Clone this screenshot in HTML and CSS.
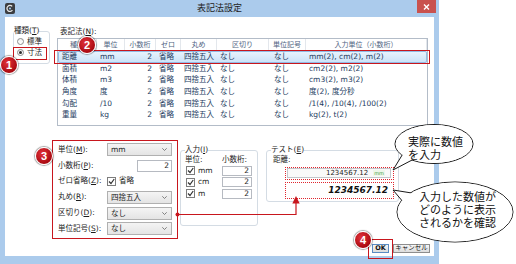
FILE: index.html
```html
<!DOCTYPE html>
<html lang="ja">
<head>
    <meta charset="UTF-8">
    <meta name="viewport" content="width=device-width, initial-scale=1.0">
    <title>表記法設定</title>
    <link rel="stylesheet" href="styles.css">
</head>
<body>
<div class="window">
    <!-- Title bar -->
    <div class="titlebar">
        <span class="app-icon">
            <svg width="10" height="11" viewBox="0 0 10 11">
                <rect x="0" y="0" width="10" height="11" rx="2" fill="#3b3d40"/>
                <path d="M7.2 3.4 A3 3 0 1 0 7.4 7.2" fill="none" stroke="#e8e8e8" stroke-width="1.3"/>
                <circle cx="5" cy="5.5" r="1.1" fill="#9fc3e6"/>
            </svg>
        </span>
        <span class="title">表記法設定</span>
        <span class="close-btn">
            <svg width="7" height="6" viewBox="0 0 7 6">
                <path d="M1 0.5 L6 5.5 M6 0.5 L1 5.5" stroke="#fff" stroke-width="1.4"/>
            </svg>
        </span>
    </div>

    <div class="client">
        <div class="top">
            <fieldset class="group kind">
                <legend>種類(<u>T</u>)</legend>
                <div class="radio-row"><span class="radio"></span>標準</div>
                <div class="radio-row"><span class="radio checked"></span>寸法</div>
            </fieldset>

            <div class="list-section">
                <div class="list-label">表記法(<u>N</u>):</div>
                <div class="list">
                    <div class="list-row list-head">
                        <span>種類</span><span>単位</span><span>小数桁</span><span>ゼロ</span><span>丸め</span><span>区切り</span><span>単位記号</span><span>入力単位（小数桁）</span>
                    </div>
                    <div class="list-row selected">
                        <span>距離</span><span>mm</span><span class="num">2</span><span>省略</span><span>四捨五入</span><span>なし</span><span>なし</span><span>mm(2), cm(2), m(2)</span>
                    </div>
                    <div class="list-row">
                        <span>面積</span><span>m2</span><span class="num">2</span><span>省略</span><span>四捨五入</span><span>なし</span><span>なし</span><span>cm2(2), m2(2)</span>
                    </div>
                    <div class="list-row">
                        <span>体積</span><span>m3</span><span class="num">2</span><span>省略</span><span>四捨五入</span><span>なし</span><span>なし</span><span>cm3(2), m3(2)</span>
                    </div>
                    <div class="list-row">
                        <span>角度</span><span>度</span><span class="num">2</span><span>省略</span><span>四捨五入</span><span>なし</span><span>なし</span><span>度(2), 度分秒</span>
                    </div>
                    <div class="list-row">
                        <span>勾配</span><span>/10</span><span class="num">2</span><span>省略</span><span>四捨五入</span><span>なし</span><span>なし</span><span>/1(4), /10(4), /100(2)</span>
                    </div>
                    <div class="list-row">
                        <span>重量</span><span>kg</span><span class="num">2</span><span>省略</span><span>四捨五入</span><span>なし</span><span>なし</span><span>kg(2), t(2)</span>
                    </div>
                </div>
            </div>
        </div>

        <div class="bottom">
            <!-- Format settings (marked 3) -->
            <div class="format-panel">
                <div class="form-row">
                    <span>単位(<u>M</u>):</span>
                    <span class="combo">mm<svg class="arrow" width="5" height="3" viewBox="0 0 5 3"><path d="M0.3 0.3 L2.5 2.5 L4.7 0.3" fill="none" stroke="#666" stroke-width="0.8"/></svg></span>
                </div>
                <div class="form-row">
                    <span>小数桁(<u>P</u>):</span>
                    <span class="num-box wide">2</span>
                </div>
                <div class="form-row">
                    <span>ゼロ省略(<u>Z</u>):</span>
                    <span class="check-label"><span class="checkbox"><svg width="7" height="7" viewBox="0 0 7 7"><path d="M1 3.5 L3 5.5 L6.2 1" fill="none" stroke="#333" stroke-width="1.2"/></svg></span>省略</span>
                </div>
                <div class="form-row">
                    <span>丸め(<u>R</u>):</span>
                    <span class="combo">四捨五入<svg class="arrow" width="5" height="3" viewBox="0 0 5 3"><path d="M0.3 0.3 L2.5 2.5 L4.7 0.3" fill="none" stroke="#666" stroke-width="0.8"/></svg></span>
                </div>
                <div class="form-row">
                    <span>区切り(<u>D</u>):</span>
                    <span class="combo">なし<svg class="arrow" width="5" height="3" viewBox="0 0 5 3"><path d="M0.3 0.3 L2.5 2.5 L4.7 0.3" fill="none" stroke="#666" stroke-width="0.8"/></svg></span>
                </div>
                <div class="form-row">
                    <span>単位記号(<u>S</u>):</span>
                    <span class="combo">なし<svg class="arrow" width="5" height="3" viewBox="0 0 5 3"><path d="M0.3 0.3 L2.5 2.5 L4.7 0.3" fill="none" stroke="#666" stroke-width="0.8"/></svg></span>
                </div>
            </div>

            <!-- Input units -->
            <fieldset class="group input-group">
                <legend>入力(<u>I</u>)</legend>
                <div class="input-grid">
                    <span>単位:</span><span>小数桁:</span>
                    <span class="check-label"><span class="checkbox"><svg width="7" height="7" viewBox="0 0 7 7"><path d="M1 3.5 L3 5.5 L6.2 1" fill="none" stroke="#333" stroke-width="1.2"/></svg></span>mm</span>
                    <span class="num-box">2</span>
                    <span class="check-label"><span class="checkbox"><svg width="7" height="7" viewBox="0 0 7 7"><path d="M1 3.5 L3 5.5 L6.2 1" fill="none" stroke="#333" stroke-width="1.2"/></svg></span>cm</span>
                    <span class="num-box">2</span>
                    <span class="check-label"><span class="checkbox"><svg width="7" height="7" viewBox="0 0 7 7"><path d="M1 3.5 L3 5.5 L6.2 1" fill="none" stroke="#333" stroke-width="1.2"/></svg></span>m</span>
                    <span class="num-box">2</span>
                </div>
            </fieldset>

            <!-- Test -->
            <fieldset class="group test-group">
                <legend>テスト(<u>E</u>)</legend>
                <div class="test-label">距離:</div>
                <div class="test-input"><span>1234567.12</span><span class="unit-tag">mm</span></div>
                <div class="test-output">1234567.12</div>
            </fieldset>
        </div>

        <div class="footer">
            <button type="button" class="btn btn-ok">OK</button>
            <button type="button" class="btn">キャンセル</button>
        </div>
    </div>

    <!-- Annotation marks -->
    <div class="mark mark-radio"></div>
    <div class="mark mark-row"></div>
    <div class="mark mark-ok"></div>
    <div class="dotted dotted-in"></div>
    <div class="dotted dotted-out"></div>
</div>

<svg class="overlay" width="516" height="264" viewBox="0 0 516 264">
    <!-- connector from panel 3 to test output -->
    <circle cx="177.5" cy="214.5" r="2" fill="#c8161d"/>
    <path d="M177.5 214.5 H296 V203" fill="none" stroke="#c8161d" stroke-width="1.2"/>
    <path d="M292.3 203.5 L299.7 203.5 L296 196 Z" fill="#c8161d"/>

    <!-- callout 1 -->
    <ellipse cx="434" cy="144" rx="39" ry="19.5" fill="#fff" stroke="#1a1a1a"/>
    <path d="M404 152 L393 170 L414 159" fill="#fff" stroke="#1a1a1a"/>
    <ellipse cx="434" cy="144" rx="38.4" ry="18.9" fill="#fff"/>

    <!-- callout 2 -->
    <ellipse cx="455" cy="212" rx="58" ry="30" fill="#fff" stroke="#1a1a1a"/>
    <path d="M404 203 L393 190 L418 194" fill="#fff" stroke="#1a1a1a"/>
    <ellipse cx="455" cy="212" rx="57.4" ry="29.4" fill="#fff"/>
</svg>

<div class="callout-text callout-1">実際に数値<br>を入力</div>
<div class="callout-text callout-2">入力した数値が<br>どのように表示<br>されるかを確認</div>

<span class="badge badge-1">1</span>
<span class="badge badge-2">2</span>
<span class="badge badge-3">3</span>
<span class="badge badge-4">4</span>
</body>
</html>
```

FILE: styles.css
```css
* {
    box-sizing: border-box;
}

html, body {
    margin: 0;
    padding: 0;
    background: #fff;
    overflow: hidden;
}

body {
    position: relative;
    width: 516px;
    height: 264px;
    font-family: "DejaVu Sans", "Noto Sans CJK JP", sans-serif;
    font-size: 7.5px;
    line-height: 10px;
    color: #1c1c1c;
}

/* Window frame */
.window {
    position: relative;
    width: 439px;
    height: 264px;
    background: #abcbec;
    display: flex;
    flex-direction: column;
}

.titlebar {
    height: 17px;
    display: grid;
    grid-template-columns: 1fr auto 1fr;
    align-items: start;
}

.app-icon {
    margin: 3px 0 0 5px;
    width: 10px;
    height: 11px;
}

.app-icon svg {
    display: block;
}

.title {
    font-size: 9px;
    line-height: 17px;
    color: #222;
}

.close-btn {
    justify-self: end;
    margin-right: 3px;
    width: 19px;
    height: 13px;
    background: #c9524e;
    display: flex;
    align-items: center;
    justify-content: center;
}

.client {
    margin: 0 5px;
    height: 239px;
    background: #fff;
    padding: 9px 0 0 8px;
    display: flex;
    flex-direction: column;
    overflow: hidden;
}

/* Group boxes */
.group {
    margin: 0;
    min-width: 0;
    border: 1px solid #d4dce4;
    border-radius: 3px;
}

.group legend {
    padding: 0;
    line-height: 10px;
}

.top {
    display: flex;
    gap: 7px;
}

.kind {
    width: 37px;
    height: 38px;
    padding: 0;
}

.radio-row {
    display: flex;
    align-items: center;
    gap: 3px;
    height: 11px;
    padding-left: 3px;
}

.radio {
    width: 7px;
    height: 7px;
    border-radius: 50%;
    border: 1px solid #8c8c8c;
    background: linear-gradient(#f2f2f2, #ffffff);
    display: flex;
    align-items: center;
    justify-content: center;
}

.radio.checked::after {
    content: "";
    width: 3px;
    height: 3px;
    border-radius: 50%;
    background: #2b2b2b;
}

/* List view */
.list-section {
    width: 371px;
    padding-top: 1px;
}

.list-label {
    line-height: 10px;
    padding-left: 3px;
}

.list {
    margin-top: 1px;
    height: 88px;
    border: 1px solid #b3bcc8;
    overflow: hidden;
}

.list-row {
    display: grid;
    grid-template-columns: 39px 28px 31px 25px 36px 52px 37px 1fr;
    height: 11.7px;
    line-height: 11.7px;
    color: #233a60;
}

.list-row span {
    padding-left: 3px;
    white-space: nowrap;
    overflow: hidden;
}

.list-row span:first-child {
    padding-left: 4px;
}

.list-row span:nth-child(7) {
    padding-left: 5px;
}

.list-row .num {
    text-align: right;
    padding-right: 4px;
}

.list-head {
    height: 12px;
    line-height: 12px;
    font-size: 7px;
    color: #4f6382;
}

.list-head span,
.list-head span:first-child,
.list-head span:nth-child(7) {
    padding: 0;
    text-align: center;
    border-right: 1px solid #e3e7ec;
}

.list-row.selected {
    background: linear-gradient(#eaf4fd, #c9e2f8);
    box-shadow: inset 0 0 0 1px #92bbe5;
    border-radius: 2px;
}

/* Bottom part */
.bottom {
    display: flex;
    align-items: flex-start;
    margin-top: 14px;
}

.format-panel {
    margin-left: 39px;
    width: 126px;
    height: 99px;
    border: 1px solid #c8161d;
    padding: 1px 4px 0 5px;
}

.form-row {
    display: grid;
    grid-template-columns: 49px 65px;
    align-items: center;
    height: 15.8px;
}

.combo {
    height: 13px;
    line-height: 11px;
    border: 1px solid #b0b0b0;
    background: linear-gradient(#f4f4f4, #e4e4e4);
    padding: 0 4px 0 3px;
    display: flex;
    justify-content: space-between;
    align-items: center;
}

.num-box {
    height: 10px;
    line-height: 8px;
    border: 1px solid #b6bac1;
    background: #fff;
    text-align: right;
    padding-right: 2px;
}

.num-box.wide {
    width: 35px;
    height: 12px;
    line-height: 10px;
    justify-self: end;
}

.check-label {
    display: flex;
    align-items: center;
    gap: 3px;
}

.checkbox {
    width: 9px;
    height: 9px;
    border: 1px solid #7d7d7d;
    background: #fff;
    display: flex;
    align-items: center;
    justify-content: center;
}

.input-group {
    margin: 5px 0 0 2px;
    width: 78px;
    height: 81px;
    padding: 0 0 0 4px;
}

.input-grid {
    display: grid;
    grid-template-columns: 37px 30px;
    grid-template-rows: 10px 11.5px 11.5px 11.5px;
    align-items: center;
}

.input-grid .check-label {
    padding-left: 1px;
}

.test-group {
    margin: 5px 0 0 8px;
    width: 133px;
    height: 57px;
    padding: 0 0 0 4px;
}

.test-label {
    padding-left: 2px;
    line-height: 10px;
}

.test-input {
    margin: 3px 0 0 16px;
    width: 104px;
    height: 10px;
    border: 1px solid #c3c6cb;
    background: #f9f9f9;
    font-size: 7px;
    line-height: 8px;
    display: flex;
    justify-content: flex-end;
    align-items: center;
    gap: 5px;
    padding-right: 5px;
}

.unit-tag {
    font-size: 5px;
    line-height: 6px;
    color: #3f9c3f;
    background: #eef7ea;
    padding: 0 1px;
}

.test-output {
    margin: 5px 0 0 16px;
    width: 104px;
    height: 14px;
    line-height: 14px;
    text-align: right;
    padding-right: 3px;
    font-size: 9px;
    font-weight: bold;
    font-style: italic;
    color: #111;
}

.footer {
    display: flex;
    justify-content: flex-end;
    gap: 4px;
    margin-top: 5px;
    padding-right: 4px;
}

.btn {
    height: 9px;
    padding: 0;
    margin: 0;
    border: 1px solid #8d8d8d;
    background: linear-gradient(#f6f6f6, #dcdcdc);
    font-family: "DejaVu Sans", "Noto Sans CJK JP", sans-serif;
    font-size: 6.5px;
    line-height: 7px;
    color: #111;
    width: 37px;
}

.btn-ok {
    width: 17px;
    border-color: #5a8cc4;
    font-weight: bold;
}

/* Annotations */
.mark {
    position: absolute;
    border: 1px solid #c8161d;
}

.mark-radio {
    left: 13px;
    top: 47px;
    width: 34px;
    height: 13px;
}

.mark-row {
    left: 54px;
    top: 50px;
    width: 376px;
    height: 14px;
}

.mark-ok {
    left: 368px;
    top: 239px;
    width: 25px;
    height: 20px;
}

.dotted {
    position: absolute;
    border: 1px dotted #e0262e;
    left: 285px;
    width: 109px;
}

.dotted-in {
    top: 167px;
    height: 13px;
}

.dotted-out {
    top: 182px;
    height: 17px;
}

.overlay {
    position: absolute;
    left: 0;
    top: 0;
    pointer-events: none;
}

.callout-text {
    position: absolute;
    font-family: "Noto Sans CJK JP", sans-serif;
    font-size: 11px;
    line-height: 13px;
    color: #111;
}

.callout-1 {
    left: 408px;
    top: 135px;
}

.callout-2 {
    left: 419px;
    top: 190px;
}

.badge {
    position: absolute;
    width: 18px;
    height: 18px;
    border-radius: 50%;
    background: radial-gradient(circle at 40% 35%, #e2323a, #a6070e 75%);
    border: 1px solid #fff;
    box-shadow: 0 0 1px 1px rgba(0, 0, 0, 0.35);
    color: #fff;
    font: bold 11px/16px "Liberation Sans", sans-serif;
    text-align: center;
}

.badge-1 { left: 0; top: 56px; }
.badge-2 { left: 78px; top: 36px; }
.badge-3 { left: 35px; top: 147px; }
.badge-4 { left: 354px; top: 231px; }
```
